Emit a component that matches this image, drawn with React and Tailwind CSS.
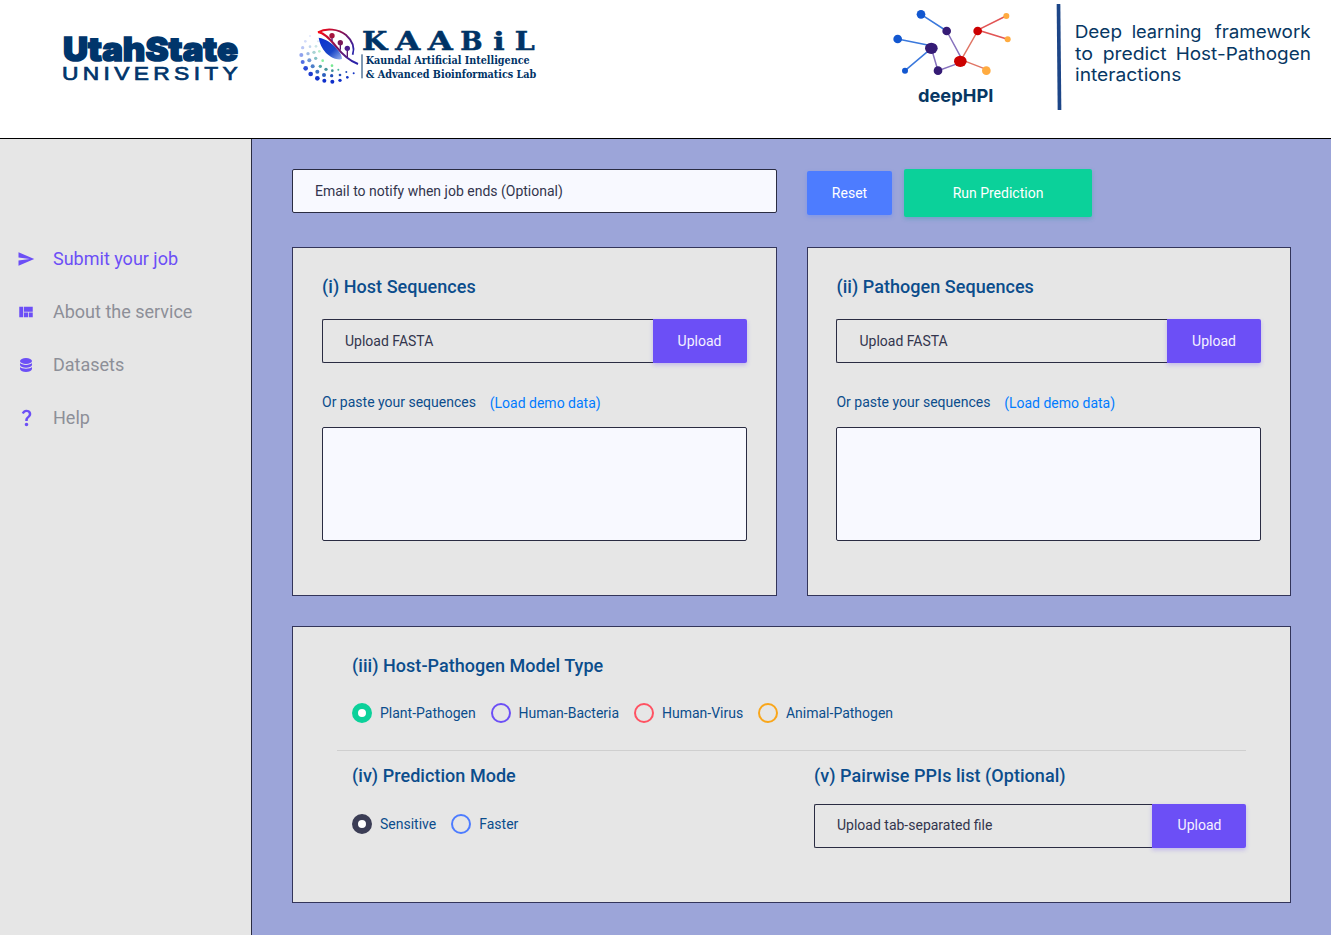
import { MdSend, MdViewQuilt, MdQuestionMark } from "react-icons/md";

const NAVY = "#00356b";

function UtahStateLogo() {
  return (
    <svg className="mt-5 ml-[50px] h-[75px] w-[200px] shrink-0" viewBox="0 0 200 75" fill={NAVY}>
      <text x="13" y="41" fontFamily="Inter, sans-serif" fontWeight="900" fontSize="33" textLength="175" lengthAdjust="spacingAndGlyphs" stroke={NAVY} strokeWidth="1.5">
        UtahState
      </text>
      <text transform="translate(12 60.3) scale(1.2 1)" fontFamily="Liberation Sans, sans-serif" fontSize="19" textLength="146.5" lengthAdjust="spacing" stroke={NAVY} strokeWidth="0.7">
        UNIVERSITY
      </text>
    </svg>
  );
}

const DOTS = [
  [60, 63, 3, "#dfe6fb"], [46, 79, 4, "#d3dcfa"], [84, 79, 3, "#dcebf5"], [38, 98, 5, "#b9c6f5"], [60, 95, 4, "#c3d6ee"],
  [78, 94, 4, "#cbe6e6"], [34, 120, 6, "#8fa2ee"], [54, 116, 5, "#9db9e4"], [72, 112, 5, "#a8d3d3"], [88, 109, 4, "#b5eec8"],
  [38, 141, 6, "#5470e3"], [58, 136, 6, "#6f97d6"], [77, 130, 5, "#84c0c4"], [98, 137, 4, "#86efa0"], [47, 160, 7, "#2c4bd8"],
  [68, 154, 6, "#4d7fc9"], [91, 154, 5, "#4ea3a8"], [62, 177, 7, "#1d3ccf"], [82, 170, 6, "#3c6fc0"],
  [108, 163, 5, "#45939b"], [82, 190, 7, "#1233cc"], [102, 180, 6, "#2c5fbd"], [126, 152, 4, "#76e892"],
  [127, 200, 6, "#0f2fcb"], [125, 182, 5, "#2450b8"], [127, 167, 4, "#3d8d97"], [145, 164, 3, "#4eb59a"],
  [103, 197, 6, "#0f2fcb"], [150, 196, 5, "#0f2fcb"], [150, 180, 4, "#2450b8"], [172, 187, 4, "#1535c5"], [169, 171, 3, "#2450b8"], [191, 175, 3, "#1535c5"],
];

function KaabilLogo() {
  const serif = "DejaVu Serif, serif";
  return (
    <svg className="mt-[15px] ml-10 h-[80px] w-[260px] shrink-0" viewBox="0 0 780 240">
      <defs>
        <linearGradient id="wing" x1="0" y1="0" x2="1" y2="0.8">
          <stop offset="0" stopColor="#ff0a14" />
          <stop offset="0.45" stopColor="#8a1050" />
          <stop offset="1" stopColor="#2a22a8" />
        </linearGradient>
        <linearGradient id="leaf" x1="0" y1="0" x2="1" y2="1">
          <stop offset="0" stopColor="#0a2fd0" />
          <stop offset="0.6" stopColor="#1a46c8" />
          <stop offset="1" stopColor="#9ab4ee" />
        </linearGradient>
      </defs>
      {DOTS.map(([x, y, r, c]) => (
        <circle key={`${x}-${y}`} cx={x} cy={y} r={r} fill={c} />
      ))}
      <path d="M86 68 C108 72 126 84 138 98 C150 111 156 122 156 132 C144 137 122 128 108 114 C96 101 88 84 86 68Z" fill="url(#leaf)" />
      <path d="M84 52 C108 38 146 42 168 60 C188 78 195 98 188 119" fill="none" stroke="url(#wing)" strokeWidth="5.5" />
      <path d="M84 51 C104 54 120 72 138 94 C160 122 180 138 204 147" fill="none" stroke="url(#wing)" strokeWidth="6" />
      <path d="M126 62 V78 M151 82 V104 M172 100 V126" fill="none" stroke="#5a1672" strokeWidth="4" />
      <circle cx="126" cy="62" r="8" fill="#a5123c" />
      <circle cx="151" cy="83" r="8" fill="#7a1858" />
      <circle cx="172" cy="100" r="8" fill="#4c1c8c" />
      <g fill="#003366" fontFamily={serif} fontWeight="700">
        <g stroke="#003366" strokeWidth="1.5">
          <text x="216" y="104" fontSize="76" textLength="76" lengthAdjust="spacingAndGlyphs">K</text>
          <text x="316" y="104" fontSize="76" textLength="75" lengthAdjust="spacingAndGlyphs">A</text>
          <text x="413" y="104" fontSize="76" textLength="75" lengthAdjust="spacingAndGlyphs">A</text>
          <text x="511" y="104" fontSize="76" textLength="67" lengthAdjust="spacingAndGlyphs">B</text>
          <text x="610" y="104" fontSize="72" textLength="34" lengthAdjust="spacingAndGlyphs">i</text>
          <text x="674" y="104" fontSize="76" textLength="60" lengthAdjust="spacingAndGlyphs">L</text>
        </g>
        <text x="227" y="146" fontSize="34" textLength="492" lengthAdjust="spacingAndGlyphs">Kaundal Artificial Intelligence</text>
        <text x="227" y="188" fontSize="34" textLength="512" lengthAdjust="spacingAndGlyphs">&amp; Advanced Bioinformatics Lab</text>
      </g>
      <path d="M216 118 V190" stroke="#003366" strokeWidth="3" />
    </svg>
  );
}

function DeepHpiLogo() {
  return (
    <svg className="ml-[330px] h-[120px] w-[451px] shrink-0" viewBox="0 0 1353 360">
      <g strokeWidth="4.5" fill="none">
        <path d="M123 43 L200 93 M53 117 L154 137 M75 212 L154 145" stroke="#3a78dc" />
        <path d="M200 93 L246 178 M154 145 L174 212 L241 188" stroke="#8772bd" />
        <path d="M241 184 L293 93 M241 178 L319 208" stroke="#e07565" />
        <path d="M378 48 L293 90 L383 118" stroke="#e25555" />
      </g>
      <g fill="#1257d0">
        <circle cx="123" cy="43" r="13" />
        <circle cx="53" cy="117" r="13" />
        <circle cx="75" cy="212" r="9" />
      </g>
      <g fill="#351b75">
        <circle cx="200" cy="93" r="13" />
        <ellipse cx="154" cy="145" rx="19" ry="17" />
        <circle cx="174" cy="212" r="13" />
      </g>
      <g fill="#cc0000">
        <circle cx="293" cy="93" r="13" />
        <ellipse cx="241" cy="184" rx="19" ry="17" />
      </g>
      <g fill="#ffab40">
        <circle cx="379" cy="48" r="9" />
        <circle cx="383" cy="118" r="9" />
        <circle cx="319" cy="212" r="13" />
      </g>
      <path d="M530 12 H541 L544 330 H533Z" fill="#1c4587" />
      <g fill="#073763" fontFamily="Inter, sans-serif">
        <text x="114" y="305" fontSize="54" fontWeight="700" textLength="226" lengthAdjust="spacingAndGlyphs">deepHPI</text>
        <g fontSize="53">
          <text x="584" y="115" textLength="142" lengthAdjust="spacingAndGlyphs">Deep</text>
          <text x="755" y="115" textLength="209" lengthAdjust="spacingAndGlyphs">learning</text>
          <text x="1004" y="115" textLength="288" lengthAdjust="spacingAndGlyphs">framework</text>
          <text x="585" y="179" textLength="54" lengthAdjust="spacingAndGlyphs">to</text>
          <text x="668" y="179" textLength="192" lengthAdjust="spacingAndGlyphs">predict</text>
          <text x="887" y="179" textLength="406" lengthAdjust="spacingAndGlyphs">Host-Pathogen</text>
          <text x="585" y="243" textLength="319" lengthAdjust="spacingAndGlyphs">interactions</text>
        </g>
      </g>
    </svg>
  );
}

function DatabaseIcon() {
  return (
    <svg className="h-[14px] w-3" viewBox="0 0 12 14" fill="currentColor">
      <ellipse cx="6" cy="3" rx="6" ry="3" />
      <path d="M0 5.1 C1.6 7.5 10.4 7.5 12 5.1 V7 C11.4 10.6 0.6 10.6 0 7Z" />
      <path d="M0 9.1 C1.6 11.4 10.4 11.4 12 9.1 V11 C11.4 15 0.6 15 0 11Z" />
    </svg>
  );
}

function NavItem({ icon, label, active }) {
  return (
    <a className={`flex h-[53px] items-center text-lg ${active ? "text-[#6c4ff6]" : "text-[#8d8f98]"}`}>
      <span className="mr-[18px] flex w-[18px] shrink-0 justify-center text-[#6c4ff6]">{icon}</span>
      {label}
    </a>
  );
}

function Heading({ children }) {
  return <h2 className="text-lg leading-6 font-medium tracking-[0.04px] text-[#0b4d8c]">{children}</h2>;
}

function UploadField({ label, compact }) {
  return (
    <div className="flex h-11">
      <div className={`flex flex-1 items-center rounded-l-xs border border-r-0 border-[#2a2c42] pl-[22px] text-[#33354d] ${compact ? "pb-0.5" : ""}`}>{label}</div>
      <button className={`w-[94px] rounded-r-xs bg-[#6c4ff6] text-[#f4f1ff] shadow-[0_2px_4px_rgba(108,79,246,0.3)] ${compact ? "pb-0.5 pl-px" : ""}`}>Upload</button>
    </div>
  );
}

function SequenceCard({ title, padding }) {
  return (
    <section className={`h-[349px] border border-[#33355a] bg-[#e6e6e6] pt-[27px] ${padding}`}>
      <Heading>{title}</Heading>
      <div className="mt-5">
        <UploadField label="Upload FASTA" />
      </div>
      <div className="mt-[29px] flex h-5 leading-5">
        <span className="text-[#0b4d8c]">Or paste your sequences</span>
        <a className="mt-px ml-[13.8px] text-[#007bff]">(Load demo data)</a>
      </div>
      <textarea className="mt-[15px] block h-[114px] w-full resize-none rounded-xs border border-[#2a2c42] bg-[#f8f9ff]" />
    </section>
  );
}

function Radio({ label, ring }) {
  return (
    <label className="flex items-center">
      <span className={`mr-2 size-5 rounded-full ${ring}`} />
      {label}
    </label>
  );
}

export default function App() {
  return (
    <div className="flex h-[935px] w-[1331px] flex-col overflow-hidden bg-white font-['Roboto',sans-serif] text-sm">
      <header className="flex h-[139px] shrink-0 items-start border-b border-black">
        <UtahStateLogo />
        <KaabilLogo />
        <DeepHpiLogo />
      </header>
      <div className="flex flex-1">
        <nav className="w-[252px] shrink-0 border-r border-[#2a2c42] bg-[#e6e6e6] pt-[93px] pl-[17px]">
          <NavItem active icon={<MdSend size={18} />} label="Submit your job" />
          <NavItem icon={<MdViewQuilt size={18} />} label="About the service" />
          <NavItem icon={<DatabaseIcon />} label="Datasets" />
          <NavItem icon={<MdQuestionMark size={21} className="shrink-0" />} label="Help" />
        </nav>
        <main className="flex-1 bg-[#9ca5d9] px-10 pt-[30px]">
          <div className="grid grid-cols-2 gap-[30px]">
            <div className="flex h-11 items-center rounded-xs border border-[#2a2c42] bg-[#f8f9ff] pl-[22px] text-[#33354d]">
              Email to notify when job ends (Optional)
            </div>
            <div className="flex h-12 items-center gap-3">
              <button className="h-11 w-[85px] rounded-xs bg-[#4d7cff] pl-px text-white shadow-[0_2px_4px_rgba(77,124,255,0.35)]">Reset</button>
              <button className="h-12 w-[188px] rounded-xs bg-[#0bd19a] pl-px text-white shadow-[0_2px_4px_rgba(11,150,154,0.3)]">Run Prediction</button>
            </div>
            <SequenceCard title="(i) Host Sequences" padding="px-[29px]" />
            <SequenceCard title="(ii) Pathogen Sequences" padding="pr-[29px] pl-[28.95px]" />
          </div>
          <section className="mt-[30px] h-[277px] border border-[#33355a] bg-[#e6e6e6] pt-[27px] pr-11 pl-11">
            <div className="pl-[15px]">
              <Heading>(iii) Host-Pathogen Model Type</Heading>
              <div className="mt-[25px] flex h-5 gap-[14.8px] text-[#0b4d8c]">
                <Radio label="Plant-Pathogen" ring="border-6 border-[#0bd19a] bg-white" />
                <Radio label="Human-Bacteria" ring="border-2 border-[#6c4ff6]" />
                <Radio label="Human-Virus" ring="border-2 border-[#ff5262]" />
                <Radio label="Animal-Pathogen" ring="border-2 border-[#f9a61a]" />
              </div>
            </div>
            <hr className="mt-[27px] border-[#cfcfcf]" />
            <div className="mt-[13px] flex justify-between pl-[15px]">
              <div>
                <Heading>(iv) Prediction Mode</Heading>
                <div className="mt-[26px] flex h-5 gap-[15px] text-[#0b4d8c]">
                  <Radio label="Sensitive" ring="border-6 border-[#3b3d55] bg-white" />
                  <Radio label="Faster" ring="border-2 border-[#4d7cff]" />
                </div>
              </div>
              <div className="w-[432px]">
                <Heading>(v) Pairwise PPIs list (Optional)</Heading>
                <div className="mt-4">
                  <UploadField compact label="Upload tab-separated file" />
                </div>
              </div>
            </div>
          </section>
        </main>
      </div>
    </div>
  );
}
